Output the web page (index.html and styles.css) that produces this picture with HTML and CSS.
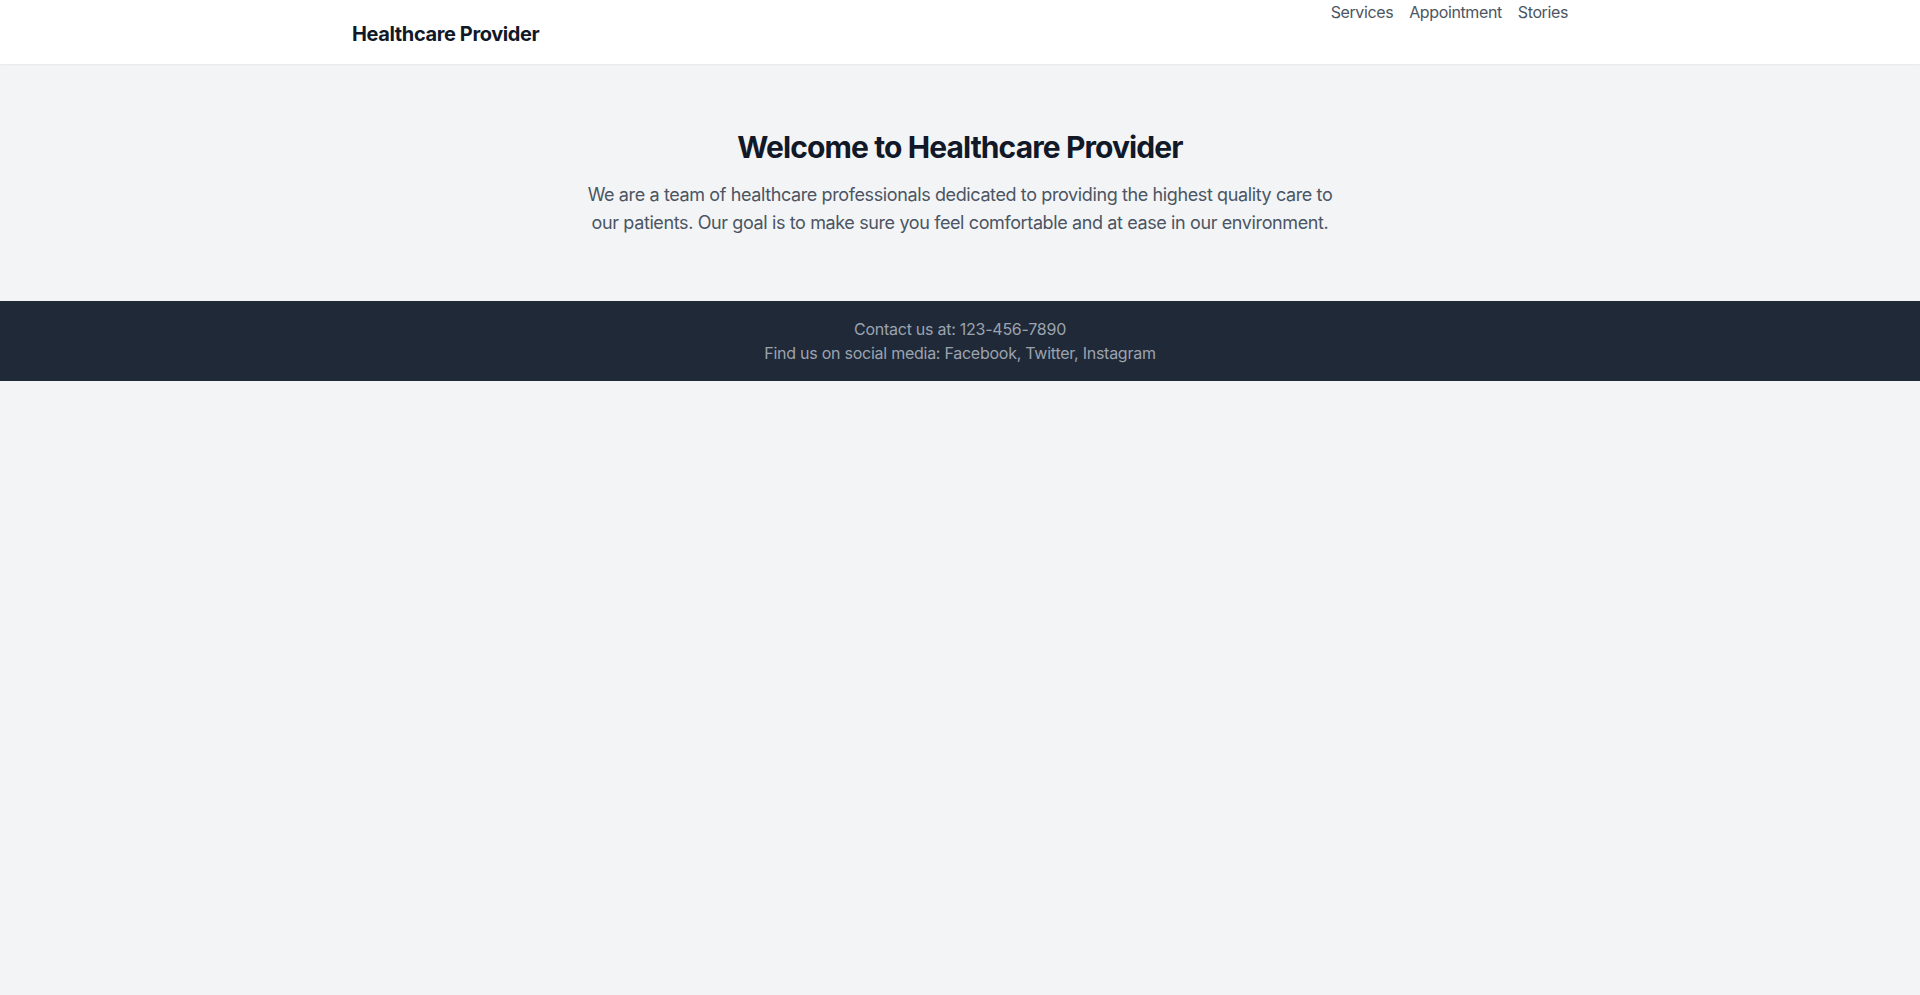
FILE: index.html
```html
<!DOCTYPE html>
<html lang="en">
<head>
<meta charset="utf-8">
<title>Healthcare Provider</title>
<link rel="stylesheet" href="styles.css">
</head>
<body>
<header class="site-header">
  <div class="container header-inner">
    <div class="logo">Healthcare Provider</div>
    <nav>
      <ul class="nav-list">
        <li><a href="#services" class="nav-link">Services</a></li>
        <li><a href="#appointment" class="nav-link">Appointment</a></li>
        <li><a href="#stories" class="nav-link">Stories</a></li>
      </ul>
    </nav>
  </div>
</header>
<main>
  <section class="hero">
    <h1 class="hero-title">Welcome to Healthcare Provider</h1>
    <p class="hero-text">We are a team of healthcare professionals dedicated to providing the highest quality care to our patients. Our goal is to make sure you feel comfortable and at ease in our environment.</p>
  </section>
</main>
<footer class="site-footer">
  <p>Contact us at: 123-456-7890</p>
  <p>Find us on social media: Facebook, Twitter, Instagram</p>
</footer>
</body>
</html>
```

FILE: styles.css
```css
* { box-sizing: border-box; }
html, body { margin: 0; padding: 0; }
body {
  background: #f3f4f6;
  font-family: Inter, "Noto Sans", sans-serif;
  color: #111827;
  line-height: 1.5;
  letter-spacing: -0.024em;
}
.site-header {
  background: #ffffff;
  height: 64px;
  box-shadow: 0 1px 2px 0 rgba(0,0,0,0.05);
  position: relative;
}
.container {
  max-width: 1280px;
  margin: 0 auto;
  padding: 0 32px;
}
.header-inner {
  display: flex;
  justify-content: space-between;
  align-items: center;
  height: 64px;
}
.logo {
  font-size: 20px;
  line-height: 28px;
  font-weight: 700;
  color: #111827;
  padding-top: 4px;
}
nav { align-self: flex-start; }
.nav-list {
  list-style: none;
  margin: 0;
  padding: 0;
  display: flex;
  gap: 16px;
}
.nav-link {
  color: #4b5563;
  text-decoration: none;
  font-size: 16px;
  line-height: 24px;
}
.hero {
  padding: 65px 16px 64px;
  text-align: center;
}
.hero-title {
  margin: 0 0 16px;
  font-size: 30px;
  line-height: 36px;
  font-weight: 700;
  color: #111827;
  letter-spacing: -0.03em;
}
.hero-text {
  margin: 0 auto;
  max-width: 768px;
  font-size: 18px;
  line-height: 28px;
  color: #4b5563;
}
.site-footer {
  background: #1f2937;
  color: #9ca3af;
  text-align: center;
  padding: 16px;
}
.site-footer p {
  margin: 0;
  font-size: 16px;
  line-height: 24px;
  letter-spacing: -0.016em;
}
```
